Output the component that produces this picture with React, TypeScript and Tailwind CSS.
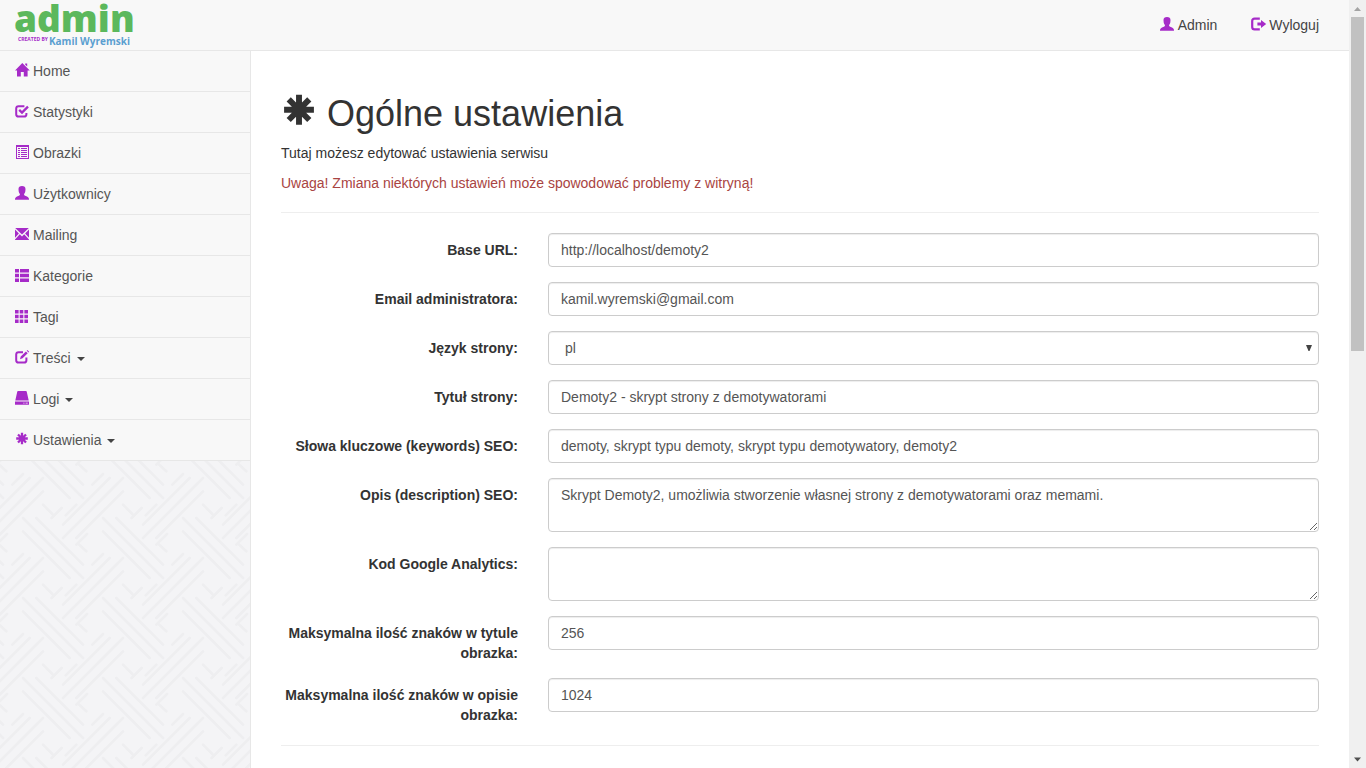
import React, { type ReactNode } from "react";

type IconName =
  | "home" | "check" | "listAlt" | "user" | "envelope" | "list"
  | "grid" | "edit" | "drive" | "asterisk" | "logout";

const drawings: Record<IconName, ReactNode> = {
  home: <path d="M7.3 0 14.8 7.4H12.6V13.6H8.8V9H5.8V13.6H2V7.4H0L7.3 0ZM10.2 .6H12.2V3.6L10.2 1.7Z" />,
  check: (
    <>
      <path d="M9.4 2.2H3.6Q1.2 2.2 1.2 4.6V10.2Q1.2 12.6 3.6 12.6H9Q11.4 12.6 11.4 10.2V9" fill="none" stroke="currentColor" strokeWidth="2" />
      <path d="M4.2 5.9 7 8.6 13 2.6" fill="none" stroke="currentColor" strokeWidth="2.3" />
    </>
  ),
  listAlt: (
    <>
      <path fillRule="evenodd" d="M1 0H14V14H1ZM2 2V13H13V2Z" />
      <path d="M3 3H5V4H3ZM6 3H12V4H6ZM3 5H5V6H3ZM6 5H12V6H6ZM3 7H5V8H3ZM6 7H12V8H6ZM3 9H5V10H3ZM6 9H12V10H6ZM3 11H5V12H3ZM6 11H12V12H6Z" />
    </>
  ),
  user: <path d="M7 0C9.2 0 10.6 1.1 10.5 3.2L10.3 5.5C10.1 6.7 9.5 7.3 9.1 8V9.1C10 10.1 13 10.7 13.7 11.9Q14 12.4 14 13.8H0Q0 12.4.3 11.9C1 10.7 4 10.1 4.9 9.1V8C4.5 7.3 3.9 6.7 3.7 5.5L3.5 3.2C3.4 1.1 4.8 0 7 0Z" />,
  envelope: <path d="M.2 1H13.8L7 7.4ZM0 2.6 3.9 6.4 0 10.7ZM14 2.6V10.7L10.1 6.4ZM4.8 7.3 7 9.4 9.2 7.3 14 12.4V13H0V12.4Z" />,
  list: <path d="M0 1H4V4.5H0ZM5 1H14V4.5H5ZM0 5.7H4V9.3H0ZM5 5.7H14V9.3H5ZM0 10.5H4V14H0ZM5 10.5H14V14H5Z" />,
  grid: <path d="M0 1H3.6V4.6H0ZM4.7 1H8.3V4.6H4.7ZM9.4 1H13V4.6H9.4ZM0 5.7H3.6V9.3H0ZM4.7 5.7H8.3V9.3H4.7ZM9.4 5.7H13V9.3H9.4ZM0 10.4H3.6V14H0ZM4.7 10.4H8.3V14H4.7ZM9.4 10.4H13V14H9.4Z" />,
  edit: (
    <>
      <path d="M8 2.2H3.6Q1.2 2.2 1.2 4.6V10.2Q1.2 12.6 3.6 12.6H9Q11.4 12.6 11.4 10.2V7.4" fill="none" stroke="currentColor" strokeWidth="2" />
      <path d="M5 9.2 5.7 6.6 10.9 1.5 12.7 3.2 7.6 8.3ZM11.7.8 12.4.1 14.2 1.8 13.5 2.5Z" />
    </>
  ),
  drive: <path fillRule="evenodd" d="M3 0H11Q11.5 0 11.7.5L13.7 9.4H.3L2.3.5Q2.5 0 3 0ZM0 10.5H14V13.8H0ZM8.3 11.8V12.6H9.5V11.8ZM10.6 11.8V12.6H12.8V11.8Z" />,
  asterisk: <path d="M7 .7V12.3M1.2 6.5H12.8M3 2.5 11 10.5M11 2.5 3 10.5" fill="none" stroke="currentColor" strokeWidth="2.3" />,
  logout: (
    <>
      <path d="M8.8 1.7H3.6Q1.2 1.7 1.2 4.1V9.9Q1.2 12.3 3.6 12.3H8.8" fill="none" stroke="currentColor" strokeWidth="2.2" />
      <path d="M6.4 5.5H10V3L15.2 7 10 11V8.5H6.4Z" />
    </>
  ),
};

function Icon({ name, className }: { name: IconName; className: string }) {
  return (
    <svg viewBox="0 0 14 14" fill="currentColor" aria-hidden="true" className={`shrink-0 overflow-visible ${className}`}>
      {drawings[name]}
    </svg>
  );
}

const menu: { label: string; icon: IconName; caret?: boolean }[] = [
  { label: "Home", icon: "home" },
  { label: "Statystyki", icon: "check" },
  { label: "Obrazki", icon: "listAlt" },
  { label: "Użytkownicy", icon: "user" },
  { label: "Mailing", icon: "envelope" },
  { label: "Kategorie", icon: "list" },
  { label: "Tagi", icon: "grid" },
  { label: "Treści", icon: "edit", caret: true },
  { label: "Logi", icon: "drive", caret: true },
  { label: "Ustawienia", icon: "asterisk", caret: true },
];

function Header() {
  return (
    <header className="flex h-[51px] items-start justify-between border-b border-[#e7e7e7] bg-[#f8f8f8]">
      <a href="#" className="flex flex-col pl-[14px] font-['Open_Sans',sans-serif] font-bold">
        <span className="text-[37px] leading-[36px] font-extrabold text-[#5cb85c]">admin</span>
        <span className="flex items-start gap-px pl-1 whitespace-nowrap">
          <span className="text-[5px] leading-[7px] text-[#a62bc8]">CREATED BY</span>
          <span className="text-[10px] leading-[11px] text-[#5b9fd0]">Kamil Wyremski</span>
        </span>
      </a>
      <nav className="flex gap-[34px] pt-[15px] pr-[30px]">
        <a href="#" className="flex gap-1 text-[#444]">
          <Icon name="user" className="mt-[2px] size-[14px] text-[#a62bc8]" />
          Admin
        </a>
        <a href="#" className="flex gap-1 text-[#444]">
          <Icon name="logout" className="mt-[2px] size-[14px] text-[#a62bc8]" />
          Wyloguj
        </a>
      </nav>
    </header>
  );
}

function Sidebar() {
  return (
    <aside className="flex w-[251px] shrink-0 flex-col border-r border-[#e7e7e7] bg-[#f4f4f6]">
      <nav>
        <ul>
          {menu.map((item) => (
            <li key={item.label} className="border-b border-[#e7e7e7] bg-[#f8f8f8]">
              <a href="#" className="flex gap-1 px-[15px] py-[10px] text-[#555]">
                <Icon name={item.icon} className="mt-[2px] size-[14px] text-[#a62bc8]" />
                {item.label}
                {item.caret && (
                  <svg viewBox="0 0 8 4" fill="#444" aria-hidden="true" className="mt-[9px] ml-[2px] h-1 w-2">
                    <path d="M0 0H8L4 4Z" />
                  </svg>
                )}
              </a>
            </li>
          ))}
        </ul>
      </nav>
      <div className="relative flex-1 overflow-hidden">
        <svg aria-hidden="true" className="absolute inset-0 size-full">
          <defs>
            <pattern id="lattice" width="80" height="80" patternUnits="userSpaceOnUse" patternTransform="translate(103 57)">
              <g fill="none" stroke="#eeeef0" strokeWidth="0.4" strokeLinecap="round" transform="scale(6.6667)">
                {[-12, 0, 12].map((x) =>
                  [-24, -12, 0, 12].map((y) => (
                    <path
                      key={`${x}/${y}`}
                      transform={`translate(${x} ${y})`}
                      d="M0 0 9 9M2 0 9 7M0 2 7 9M-6 15 3 6M-6 13 1 6M-4 15 3 8M8 4 9.6 2.4M8.2 3.8 9.5 5M10.4 7 12 5.4M3 10 4.4 11.4M4.3 12 5.8 10.5M6.4 11.6 8 10"
                    />
                  )),
                )}
              </g>
            </pattern>
          </defs>
          <rect width="100%" height="100%" fill="url(#lattice)" />
        </svg>
      </div>
    </aside>
  );
}

const control =
  "block w-full rounded border border-[#ccc] bg-white px-3 py-[6px] leading-5 text-[#555] shadow-[inset_0_1px_1px_rgba(0,0,0,0.075)] outline-none focus:border-[#66afe9]";

type Field = { id: string; label: string; value: string; kind?: "select" | "textarea" };

const fields: Field[] = [
  { id: "base-url", label: "Base URL:", value: "http://localhost/demoty2" },
  { id: "email", label: "Email administratora:", value: "kamil.wyremski@gmail.com" },
  { id: "lang", label: "Język strony:", value: "pl", kind: "select" },
  { id: "title", label: "Tytuł strony:", value: "Demoty2 - skrypt strony z demotywatorami" },
  { id: "keywords", label: "Słowa kluczowe (keywords) SEO:", value: "demoty, skrypt typu demoty, skrypt typu demotywatory, demoty2" },
  { id: "description", label: "Opis (description) SEO:", value: "Skrypt Demoty2, umożliwia stworzenie własnej strony z demotywatorami oraz memami.", kind: "textarea" },
  { id: "analytics", label: "Kod Google Analytics:", value: "", kind: "textarea" },
  { id: "max-title", label: "Maksymalna ilość znaków w tytule obrazka:", value: "256" },
  { id: "max-description", label: "Maksymalna ilość znaków w opisie obrazka:", value: "1024" },
];

function Control({ field }: { field: Field }) {
  if (field.kind === "textarea") {
    return <textarea id={field.id} rows={2} defaultValue={field.value} className={`${control} h-[54px] resize-y`} />;
  }
  if (field.kind === "select") {
    return (
      <div className="relative">
        <select id={field.id} defaultValue={field.value} className={`${control} h-[34px] appearance-none pl-4`}>
          <option value="pl">pl</option>
          <option value="en">en</option>
        </select>
        <svg viewBox="0 0 6 6" fill="#444" aria-hidden="true" className="pointer-events-none absolute top-[14px] right-[7px] size-[6px]">
          <path d="M0 0H6L3.5 6H2.5Z" />
        </svg>
      </div>
    );
  }
  return <input id={field.id} type="text" defaultValue={field.value} className={`${control} h-[34px]`} />;
}

function Settings() {
  return (
    <main className="min-w-0 flex-1 bg-white px-[30px] pt-[42px] pb-5">
      <h1 className="flex gap-[10px] text-[36px] leading-[42px]">
        <Icon name="asterisk" className="size-9" />
        Ogólne ustawienia
      </h1>
      <p className="mt-2">Tutaj możesz edytować ustawienia serwisu</p>
      <p className="mt-[10px] text-[#a94442]">Uwaga! Zmiana niektórych ustawień może spowodować problemy z witryną!</p>
      <hr className="mt-[19px] mb-5 border-[#eee]" />
      <form className="-mx-[15px] flex flex-col gap-[15px]">
        {fields.map((field) => (
          <div key={field.id} className="grid grid-cols-12">
            <label htmlFor={field.id} className="col-span-3 px-[15px] pt-[7px] text-right font-bold">
              {field.label}
            </label>
            <div className="col-span-9 px-[15px]">
              <Control field={field} />
            </div>
          </div>
        ))}
      </form>
      <hr className="mt-5 border-[#eee]" />
    </main>
  );
}

function ScrollTrack() {
  return (
    <div aria-hidden="true" className="sticky top-0 flex h-screen w-[17px] shrink-0 flex-col items-center bg-[#f0f0f0]">
      <svg viewBox="0 0 17 17" className="h-[17px] w-full">
        <path d="M5 11 8.5 7 12 11Z" fill="#a3a3a3" />
      </svg>
      <div className="flex w-full flex-1 flex-col px-[2px]">
        <div className="h-[45.5%] bg-[#c1c1c1]" />
      </div>
      <svg viewBox="0 0 17 17" className="h-[17px] w-full">
        <path d="M5 6.5H12L8.5 10.5Z" fill="#505050" />
      </svg>
    </div>
  );
}

export default function App() {
  return (
    <div className="flex min-h-screen items-stretch bg-white font-['Liberation_Sans',Arial,sans-serif] text-[14px] leading-5 text-[#333]">
      <div className="flex min-w-0 flex-1 flex-col">
        <Header />
        <div className="flex flex-1">
          <Sidebar />
          <Settings />
        </div>
      </div>
      <ScrollTrack />
    </div>
  );
}
